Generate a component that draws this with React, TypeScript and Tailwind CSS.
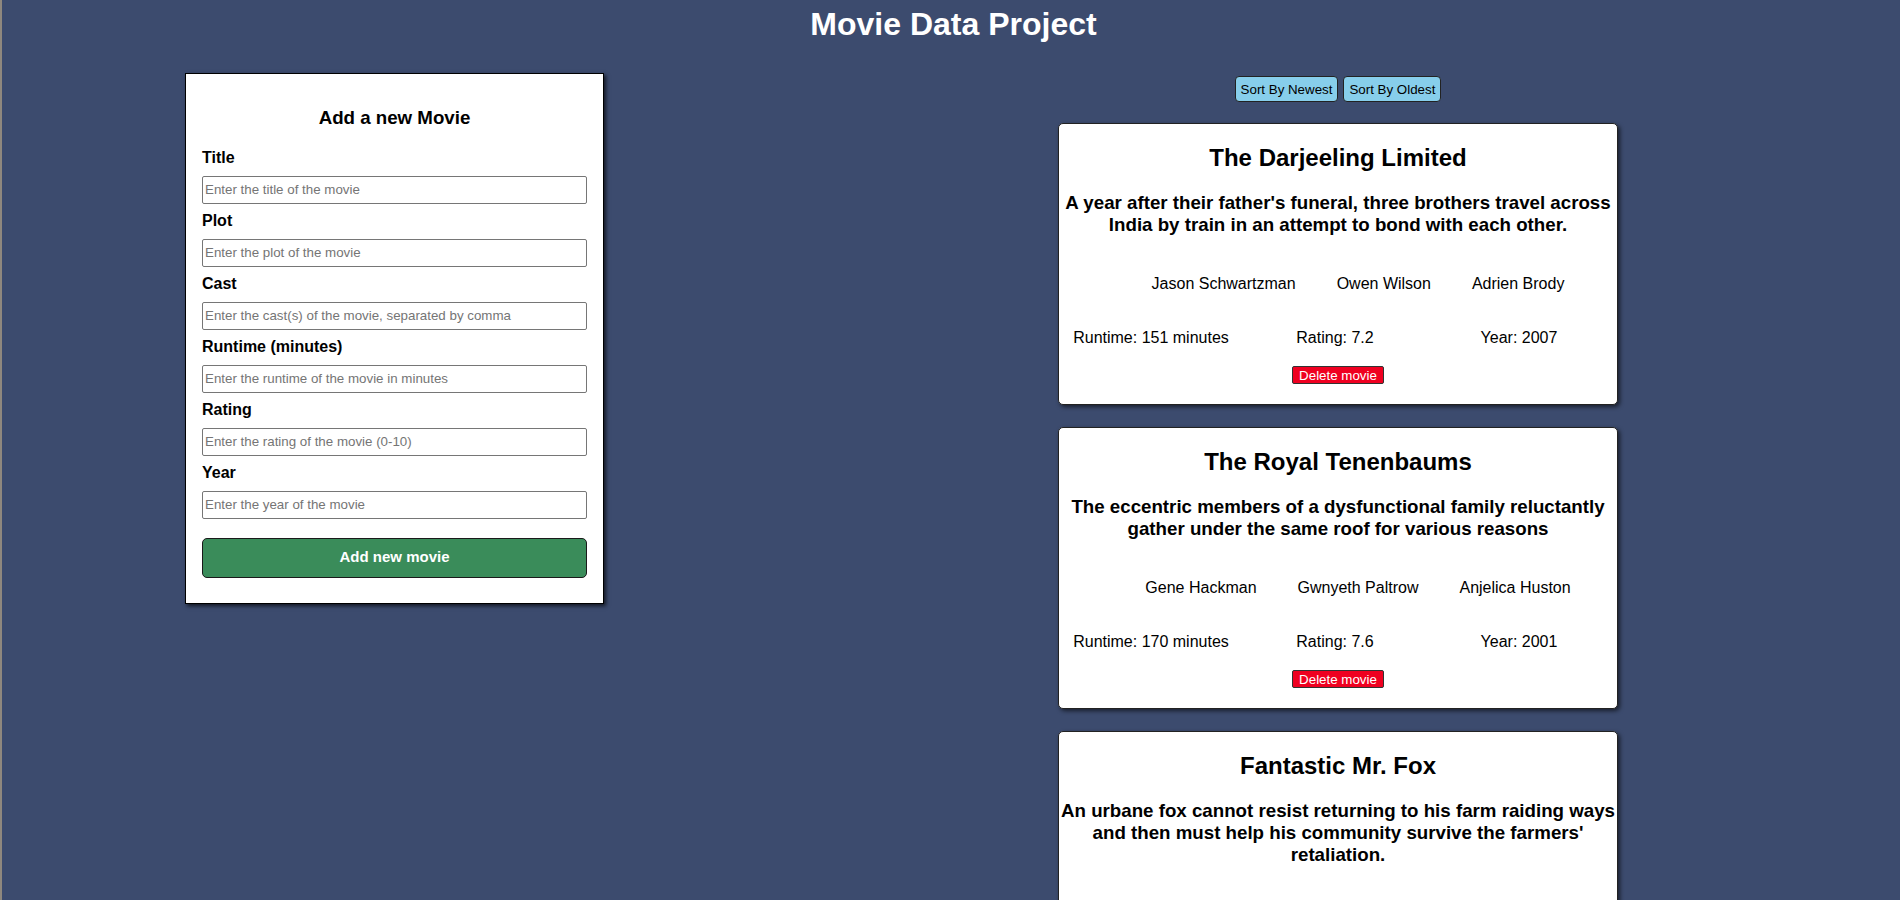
import React from "react";

type Movie = {
  title: string;
  plot: string;
  cast: string[];
  runtime: number;
  rating: number;
  year: number;
};

const movies: Movie[] = [
  {
    title: "The Darjeeling Limited",
    plot: "A year after their father's funeral, three brothers travel across India by train in an attempt to bond with each other.",
    cast: ["Jason Schwartzman", "Owen Wilson", "Adrien Brody"],
    runtime: 151,
    rating: 7.2,
    year: 2007,
  },
  {
    title: "The Royal Tenenbaums",
    plot: "The eccentric members of a dysfunctional family reluctantly gather under the same roof for various reasons",
    cast: ["Gene Hackman", "Gwnyeth Paltrow", "Anjelica Huston"],
    runtime: 170,
    rating: 7.6,
    year: 2001,
  },
  {
    title: "Fantastic Mr. Fox",
    plot: "An urbane fox cannot resist returning to his farm raiding ways and then must help his community survive the farmers' retaliation.",
    cast: ["George Clooney", "Meryl Streep", "Bill Murray"],
    runtime: 87,
    rating: 7.9,
    year: 2009,
  },
];

const fields = [
  { label: "Title", ph: "Enter the title of the movie" },
  { label: "Plot", ph: "Enter the plot of the movie" },
  { label: "Cast", ph: "Enter the cast(s) of the movie, separated by comma" },
  { label: "Runtime (minutes)", ph: "Enter the runtime of the movie in minutes" },
  { label: "Rating", ph: "Enter the rating of the movie (0-10)" },
  { label: "Year", ph: "Enter the year of the movie" },
];

function MovieCard({ m }: { m: Movie }) {
  return (
    <div className="w-[560px] bg-white rounded-[5px] border border-[#222] shadow-[2px_2px_4px_rgba(0,0,0,0.6)] pt-[20px] pb-[20px] text-black">
      <h2 className="text-center text-[24px] font-bold leading-[28px]">{m.title}</h2>
      <h3 className="mt-[20px] px-[1px] text-center text-[18.72px] font-bold leading-[22px]">{m.plot}</h3>
      <ul className="mt-[39px] flex justify-center gap-[41px] pl-[40px] text-[16px] leading-[18px]">
        {m.cast.map((c) => (
          <li key={c}>{c}</li>
        ))}
      </ul>
      <div className="mt-[36px] grid grid-cols-3 pr-[6px] text-center text-[16px] leading-[18px]">
        <p>Runtime: {m.runtime} minutes</p>
        <p>Rating: {m.rating}</p>
        <p>Year: {m.year}</p>
      </div>
      <div className="mt-[19px] flex justify-center">
        <button className="h-[18px] px-[6px] bg-[#ef0020] text-white text-[13.33px] leading-[15px] border border-[#333] rounded-[2px]">
          Delete movie
        </button>
      </div>
    </div>
  );
}

export default function App() {
  return (
    <div className="h-[900px] overflow-hidden bg-[#3c4b6e] border-l-2 border-[#8f887e] font-['Liberation_Sans',Arial,sans-serif]">
      <h1 className="pt-[6px] pl-[5px] text-center text-[32px] font-bold leading-[37px] text-white">Movie Data Project</h1>
      <div className="mt-[30px] flex items-start">
        <form
          className="ml-[183px] w-[419px] bg-white border border-black shadow-[2px_2px_4px_rgba(0,0,0,0.7)] px-4 pt-[33px] pb-[25px] text-black"
          onSubmit={(e) => e.preventDefault()}
        >
          <h3 className="text-center text-[18.72px] font-bold leading-[21.5px] mb-[20px]">Add a new Movie</h3>
          {fields.map((f) => (
            <div key={f.label}>
              <label className="block text-[16px] font-bold leading-[18px] mb-[9px]">{f.label}</label>
              <input
                className="block w-full h-[28px] mb-[8px] border border-[#767676] rounded-[2px] px-[2px] text-[13.33px] placeholder:text-[#757575] bg-white"
                placeholder={f.ph}
              />
            </div>
          ))}
          <button
            type="submit"
            className="mt-[11px] w-full h-[40px] bg-[#3a8c5a] text-white text-[15px] font-bold border border-[#1a1a1a] rounded-[5px]"
          >
            Add new movie
          </button>
        </form>
        <div className="ml-[454px] w-[560px] flex flex-col">
          <div className="mt-[3px] flex justify-center gap-[5px]">
            <button className="h-[26px] px-[5px] bg-[#87ceeb] text-black text-[13.33px] leading-[15px] border border-[#222] rounded-[4px]">
              Sort By Newest
            </button>
            <button className="h-[26px] px-[5px] bg-[#87ceeb] text-black text-[13.33px] leading-[15px] border border-[#222] rounded-[4px]">
              Sort By Oldest
            </button>
          </div>
          <div className="mt-[21px] flex flex-col gap-[22px]">
            {movies.map((m) => (
              <MovieCard key={m.title} m={m} />
            ))}
          </div>
        </div>
      </div>
    </div>
  );
}
